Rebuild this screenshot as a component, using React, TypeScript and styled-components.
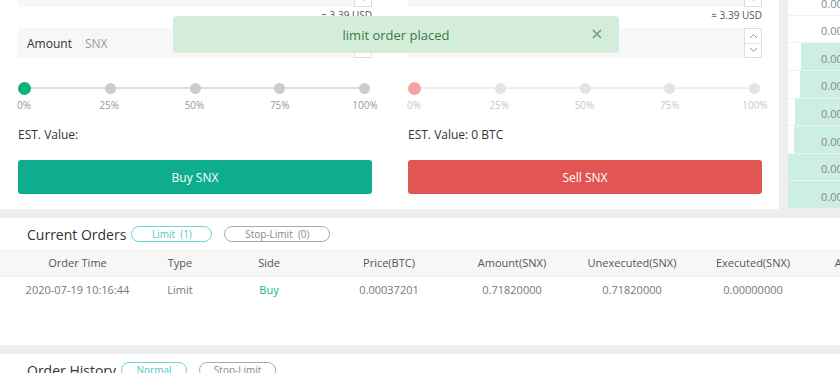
import { createGlobalStyle, styled } from "styled-components";

const GlobalStyle = createGlobalStyle`
  html, body {
    margin: 0;
    padding: 0;
    background: #eeeeee;
    overflow: hidden;
    font-family: "Open Sans", "Noto Sans", sans-serif;
  }
`;

const Page = styled.div`
  position: relative;
  width: 840px;
  height: 373px;
  overflow: hidden;
`;

// the page is scrolled a little: the price input is mostly above the fold
const Scroller = styled.div`
  margin-top: -23px;
  width: 1100px;
`;

const TopRow = styled.div`
  display: flex;
  gap: 9px;
`;

const TradePanel = styled.div`
  width: 744px;
  background: #fff;
  padding: 0 17px 15px 18px;
  display: grid;
  grid-template-columns: 1fr 1fr;
  gap: 36px;
`;

const Side = styled.div`
  display: flex;
  flex-direction: column;
`;

const InputBox = styled.div<{ $mt?: number }>`
  height: 30px;
  margin-top: ${(p) => p.$mt ?? 0}px;
  background: #f7f7f7;
  display: flex;
  align-items: center;
  padding-left: 9px;
  font-size: 12px;
`;

const Label = styled.span`
  color: #333;
  margin-right: 13px;
`;

const Unit = styled.span`
  color: #999;
`;

const Stepper = styled.div`
  margin-left: auto;
  width: 16px;
  height: 28px;
  border: 1px solid #ddd;
  background: #fff;
  display: flex;
  flex-direction: column;
`;

const StepHalf = styled.div<{ $top?: boolean }>`
  flex: 1;
  display: flex;
  align-items: center;
  justify-content: center;
  border-bottom: ${(p) => (p.$top ? "1px solid #e5e5e5" : "none")};
`;

const Hint = styled.div`
  text-align: right;
  font-size: 10px;
  line-height: 17px;
  color: #555;
`;

const Slider = styled.div<{ $light?: boolean }>`
  position: relative;
  margin-top: 24px;
  margin-right: 2px;
  height: 12px;
  display: flex;
  justify-content: space-between;
  align-items: center;
  &::before {
    content: "";
    position: absolute;
    left: 6px;
    right: 6px;
    top: 5px;
    height: 2px;
    background: ${(p) => (p.$light ? "#eeeeee" : "#dddddd")};
  }
`;

const Dot = styled.div<{ $color: string; $big?: boolean }>`
  position: relative;
  width: ${(p) => (p.$big ? 13 : 11)}px;
  height: ${(p) => (p.$big ? 13 : 11)}px;
  border-radius: 50%;
  background: ${(p) => p.$color};
`;

const Marks = styled.div`
  margin-top: 4px;
  margin-right: 1px;
  display: flex;
  justify-content: space-between;
`;

const Mark = styled.div<{ $light?: boolean }>`
  width: 12px;
  display: flex;
  justify-content: center;
  white-space: nowrap;
  font-size: 10px;
  line-height: 14px;
  color: ${(p) => (p.$light ? "#c8c8c8" : "#999")};
`;

const EstValue = styled.div`
  margin-top: 15px;
  font-size: 12px;
  line-height: 16px;
  color: #333;
`;

const ActionButton = styled.button<{ $color: string }>`
  margin-top: 17px;
  height: 34px;
  border: none;
  border-radius: 3px;
  background: ${(p) => p.$color};
  color: #fff;
  font-family: inherit;
  font-size: 12px;
`;

const OrderBook = styled.div`
  width: 260px;
  background: #fff;
  display: flex;
  flex-direction: column;
  justify-content: flex-end;
`;

const BookRow = styled.div`
  position: relative;
  height: 27.6px;
  border-bottom: 1px solid #f0f0f0;
  box-sizing: border-box;
  display: flex;
  align-items: center;
  padding-left: 33px;
  padding-top: 3px;
  font-size: 11px;
  color: #888;
`;

const DepthBar = styled.div`
  position: absolute;
  right: 0;
  top: 0;
  bottom: 0;
  background: #cdeee2;
`;

const BookPrice = styled.span`
  position: relative;
`;

const Section = styled.div<{ $height: number }>`
  margin-top: 9px;
  height: ${(p) => p.$height}px;
  background: #fff;
`;

const SectionHead = styled.div`
  height: 31px;
  display: flex;
  align-items: center;
  padding-left: 27px;
`;

const Title = styled.div`
  font-size: 14px;
  color: #333;
  margin-right: 5px;
  padding-top: 1px;
`;

const Pill = styled.div<{ $active?: boolean; $width: number }>`
  width: ${(p) => p.$width}px;
  height: 14px;
  margin-right: 12px;
  border: 1px solid ${(p) => (p.$active ? "#6bd6d6" : "#aaa")};
  border-radius: 8px;
  display: flex;
  align-items: center;
  justify-content: center;
  font-size: 10px;
  color: ${(p) => (p.$active ? "#4cc7c7" : "#888")};
  white-space: pre;
`;

const cols = "155px 50px 128px 112px 134px 106px 136px 60px";

const HeadRow = styled.div`
  display: grid;
  grid-template-columns: ${cols};
  height: 27px;
  align-items: center;
  background: #f7f7f7;
  border-bottom: 1px solid #f0f0f0;
  font-size: 11px;
  color: #555;
  text-align: center;
`;

const DataRow = styled.div`
  display: grid;
  grid-template-columns: ${cols};
  height: 24px;
  align-items: center;
  font-size: 11px;
  color: #777;
  text-align: center;
`;

const Cell = styled.div<{ $buy?: boolean }>`
  color: ${(p) => (p.$buy ? "#14b182" : "inherit")};
`;

const Toast = styled.div`
  position: absolute;
  left: 173px;
  top: 16px;
  width: 446px;
  height: 37px;
  border-radius: 4px;
  background: #d4edda;
  display: flex;
  align-items: center;
  justify-content: center;
  font-size: 13px;
  color: #3a7a48;
`;

const Close = styled.div`
  position: absolute;
  right: 17px;
  top: 13px;
  display: flex;
`;

const Chevron = ({ up }: { up?: boolean }) => (
  <svg width="9" height="6" viewBox="0 0 9 6">
    <path
      d={up ? "M1 5 L4.5 1.5 L8 5" : "M1 1 L4.5 4.5 L8 1"}
      fill="none"
      stroke="#999"
      strokeWidth="1"
    />
  </svg>
);

const steps = ["0%", "25%", "50%", "75%", "100%"];

function TradeSide({ kind }: { kind: "buy" | "sell" }) {
  const sell = kind === "sell";
  return (
    <Side>
      <InputBox>
        <Label>Price</Label>
        <Unit>BTC</Unit>
        <Stepper>
          <StepHalf $top>
            <Chevron up />
          </StepHalf>
          <StepHalf>
            <Chevron />
          </StepHalf>
        </Stepper>
      </InputBox>
      <Hint>≈ 3.39 USD</Hint>
      <InputBox $mt={4}>
        <Label>Amount</Label>
        <Unit>SNX</Unit>
        <Stepper>
          <StepHalf $top>
            <Chevron up />
          </StepHalf>
          <StepHalf>
            <Chevron />
          </StepHalf>
        </Stepper>
      </InputBox>
      <Slider $light={sell}>
        {steps.map((s, i) => (
          <Dot
            key={s}
            $big={i === 0}
            $color={
              i === 0 ? (sell ? "#f3a3a3" : "#0bb37b") : sell ? "#e4e4e4" : "#cccccc"
            }
          />
        ))}
      </Slider>
      <Marks>
        {steps.map((s) => (
          <Mark key={s} $light={sell}>
            {s}
          </Mark>
        ))}
      </Marks>
      <EstValue>{sell ? "EST. Value: 0 BTC" : "EST. Value:"}</EstValue>
      <ActionButton $color={sell ? "#e25555" : "#0dad8e"}>
        {sell ? "Sell SNX" : "Buy SNX"}
      </ActionButton>
    </Side>
  );
}

const depth = [0, 0, 95, 95.4, 97.3, 97.7, 100, 100];

const headers = [
  "Order Time",
  "Type",
  "Side",
  "Price(BTC)",
  "Amount(SNX)",
  "Unexecuted(SNX)",
  "Executed(SNX)",
  "Action",
];

function App() {
  return (
    <Page>
      <GlobalStyle />
      <Scroller>
        <TopRow>
          <TradePanel>
            <TradeSide kind="buy" />
            <TradeSide kind="sell" />
          </TradePanel>
          <OrderBook>
            {depth.map((d, i) => (
              <BookRow key={i}>
                {d > 0 && <DepthBar style={{ width: `${d}%` }} />}
                <BookPrice>0.00037201</BookPrice>
              </BookRow>
            ))}
          </OrderBook>
        </TopRow>
        <Section $height={127}>
          <SectionHead>
            <Title>Current Orders</Title>
            <Pill $active $width={79}>
              {"Limit  (1)"}
            </Pill>
            <Pill $width={104}>{"Stop-Limit  (0)"}</Pill>
          </SectionHead>
          <HeadRow>
            {headers.map((h) => (
              <div key={h}>{h}</div>
            ))}
          </HeadRow>
          <DataRow>
            <Cell>2020-07-19 10:16:44</Cell>
            <Cell>Limit</Cell>
            <Cell $buy>Buy</Cell>
            <Cell>0.00037201</Cell>
            <Cell>0.71820000</Cell>
            <Cell>0.71820000</Cell>
            <Cell>0.00000000</Cell>
            <Cell />
          </DataRow>
        </Section>
        <Section $height={120}>
          <SectionHead>
            <Title>Order History</Title>
            <Pill $active $width={64}>
              Normal
            </Pill>
            <Pill $width={75}>Stop-Limit</Pill>
          </SectionHead>
        </Section>
      </Scroller>
      <Toast>
        limit order placed
        <Close>
          <svg width="10" height="10" viewBox="0 0 10 10">
            <path d="M1 1 L9 9 M9 1 L1 9" stroke="#6f9c7a" strokeWidth="1.6" />
          </svg>
        </Close>
      </Toast>
    </Page>
  );
}

export default App;
